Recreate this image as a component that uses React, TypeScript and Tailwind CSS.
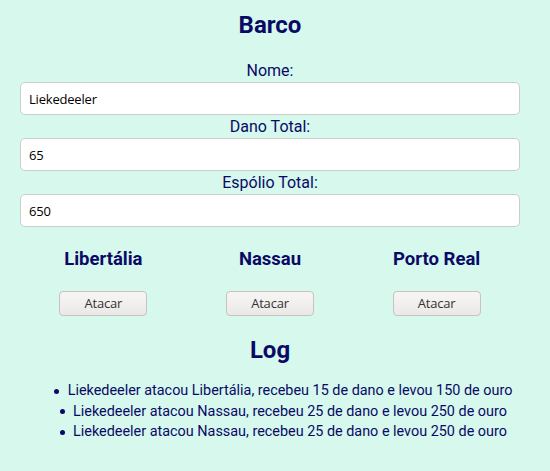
const ilhas = ["Libertália", "Nassau", "Porto Real"];

const logs = [
  "Liekedeeler atacou Libertália, recebeu 15 de dano e levou 150 de ouro",
  "Liekedeeler atacou Nassau, recebeu 25 de dano e levou 250 de ouro",
  "Liekedeeler atacou Nassau, recebeu 25 de dano e levou 250 de ouro",
];

function Campo({ label, value }: { label: string; value: string }) {
  return (
    <div className="flex flex-col">
      <label className="text-center text-[16px] leading-[23px]">{label}</label>
      <input
        readOnly
        value={value}
        className="h-[33px] w-full rounded-[5px] border border-[#cccccc] bg-white px-2 text-[13px] tracking-[-0.2px] text-black outline-none"
        style={{ fontFamily: '"Open Sans", sans-serif' }}
      />
    </div>
  );
}

export default function App() {
  return (
    <div
      className="min-h-[471px] bg-[#d6f8ed] pl-5 pr-[30px] text-[#0a0a66]"
      style={{ fontFamily: "Roboto, sans-serif" }}
    >
      <h2 className="pt-[9px] text-center text-[24px] font-bold leading-[32px]">Barco</h2>

      <div className="mt-[18px]">
        <Campo label="Nome:" value="Liekedeeler" />
        <Campo label="Dano Total:" value="65" />
        <Campo label="Espólio Total:" value="650" />
      </div>

      {/* ilhas */}
      <div className="mt-[20px] grid grid-cols-3">
        {ilhas.map((nome) => (
          <div key={nome} className="flex flex-col items-center">
            <h3 className="text-[18.5px] font-bold leading-[24px]">{nome}</h3>
            <button
              className="mt-[20px] h-[25px] w-[88px] rounded-[4px] border border-[#c9c2bd] bg-gradient-to-b from-[#f7f6f5] to-[#ebe9e7] text-[13px] tracking-[-0.2px] text-[#333]"
              style={{ fontFamily: '"Open Sans", sans-serif' }}
            >
              Atacar
            </button>
          </div>
        ))}
      </div>

      <h2 className="mt-[18px] text-center text-[24px] font-bold leading-[32px]">Log</h2>
      <ul className="mt-[15px] pl-10 text-center text-[14.4px] leading-[20.5px]">
        {logs.map((l, i) => (
          <li key={i}>
            <span className="ml-[-13.5px] mr-[8.5px] inline-block h-[5px] w-[5px] rounded-full bg-[#0a0a66] align-middle" />
            {l}
          </li>
        ))}
      </ul>
    </div>
  );
}
